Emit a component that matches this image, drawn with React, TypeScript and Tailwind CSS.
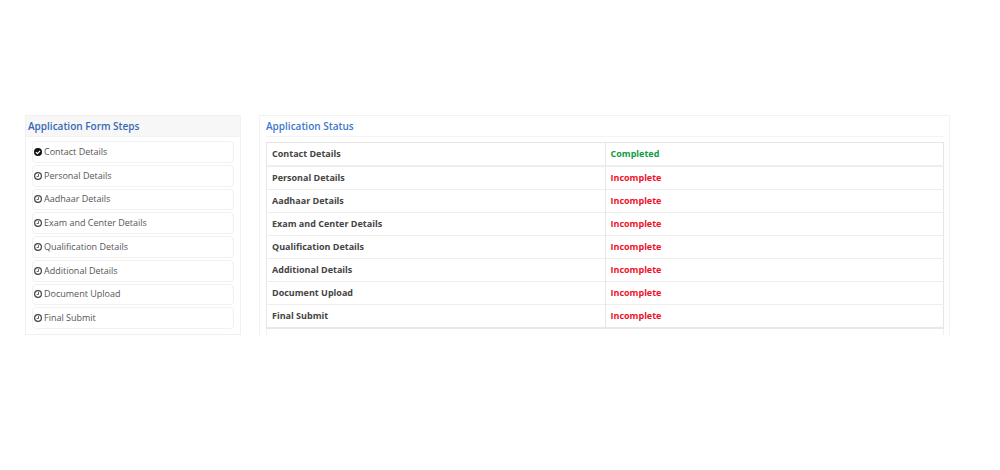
import React from 'react';

type Step = { name: string; done: boolean };

const steps: Step[] = [
  { name: 'Contact Details', done: true },
  { name: 'Personal Details', done: false },
  { name: 'Aadhaar Details', done: false },
  { name: 'Exam and Center Details', done: false },
  { name: 'Qualification Details', done: false },
  { name: 'Additional Details', done: false },
  { name: 'Document Upload', done: false },
  { name: 'Final Submit', done: false },
];

const StepIcon: React.FC<{ done: boolean }> = ({ done }) => (
  <svg viewBox="0 0 16 16" className="h-2 w-2 shrink-0" aria-hidden="true">
    {done ? (
      <>
        <circle cx="8" cy="8" r="8" fill="#111" />
        <path d="M3.8 8.2l3 3 5.4-5.6" fill="none" stroke="#fff" strokeWidth="2.4" />
      </>
    ) : (
      <>
        <circle cx="8" cy="8" r="6.8" fill="none" stroke="#444" strokeWidth="2.4" />
        <path d="M9 4v5H5.2" fill="none" stroke="#555" strokeWidth="1.8" />
      </>
    )}
  </svg>
);

export default function App() {
  return (
    <div className="min-h-screen bg-white pt-[115px] pr-[50px] pl-[25px] font-['Open_Sans',sans-serif]">
      <div className="flex gap-[18px]">
        {/* Sidebar steps */}
        <nav className="flex w-[22.5vw] max-w-[216px] shrink-0 flex-col border border-[#f0f0f0]">
          <h2 className="border-b border-[#f2f2f2] bg-[#f7f7f7] px-0.5 py-0.5 text-[10px] leading-4 font-semibold text-[#3468b4]">
            Application Form Steps
          </h2>
          <ul className="flex flex-1 flex-col gap-0.5 px-1.5 pt-1 pb-[5px]">
            {steps.map((step) => (
              <li key={step.name} className="flex-1">
                <a
                  href="#"
                  className="flex h-full items-center gap-0.5 rounded-sm border border-[#f1f1f1] px-px text-[9px] leading-4 text-[#555]"
                >
                  <StepIcon done={step.done} />
                  {step.name}
                </a>
              </li>
            ))}
          </ul>
        </nav>

        {/* Status table */}
        <section className="min-w-0 flex-1 border-x border-t border-[#f2f2f2] pr-[5px] pl-1.5">
          <h2 className="border-b border-[#f4f4f4] py-0.5 text-[10px] leading-4 font-semibold text-[#3d77cc]">
            Application Status
          </h2>
          <table className="mt-[5px] w-full table-fixed border-collapse border border-[#e6e6e6] text-left text-[9px] leading-[22px]">
            <tbody>
              {steps.map((step) => (
                <tr key={step.name} className="border-b border-[#eee] first:border-b-2 last:border-b-2 last:border-[#e8e8e8]">
                  <th scope="row" className="border-r border-[#e6e6e6] px-[5px] py-0 font-bold text-[#444]">
                    {step.name}
                  </th>
                  <td className={`px-[5px] py-0 font-bold ${step.done ? 'text-[#0f9d3e]' : 'text-[#f0102a]'}`}>
                    {step.done ? 'Completed' : 'Incomplete'}
                  </td>
                </tr>
              ))}
            </tbody>
          </table>
          <div className="h-1.5 border-x border-[#f0f0f0]" />
        </section>
      </div>
    </div>
  );
}
